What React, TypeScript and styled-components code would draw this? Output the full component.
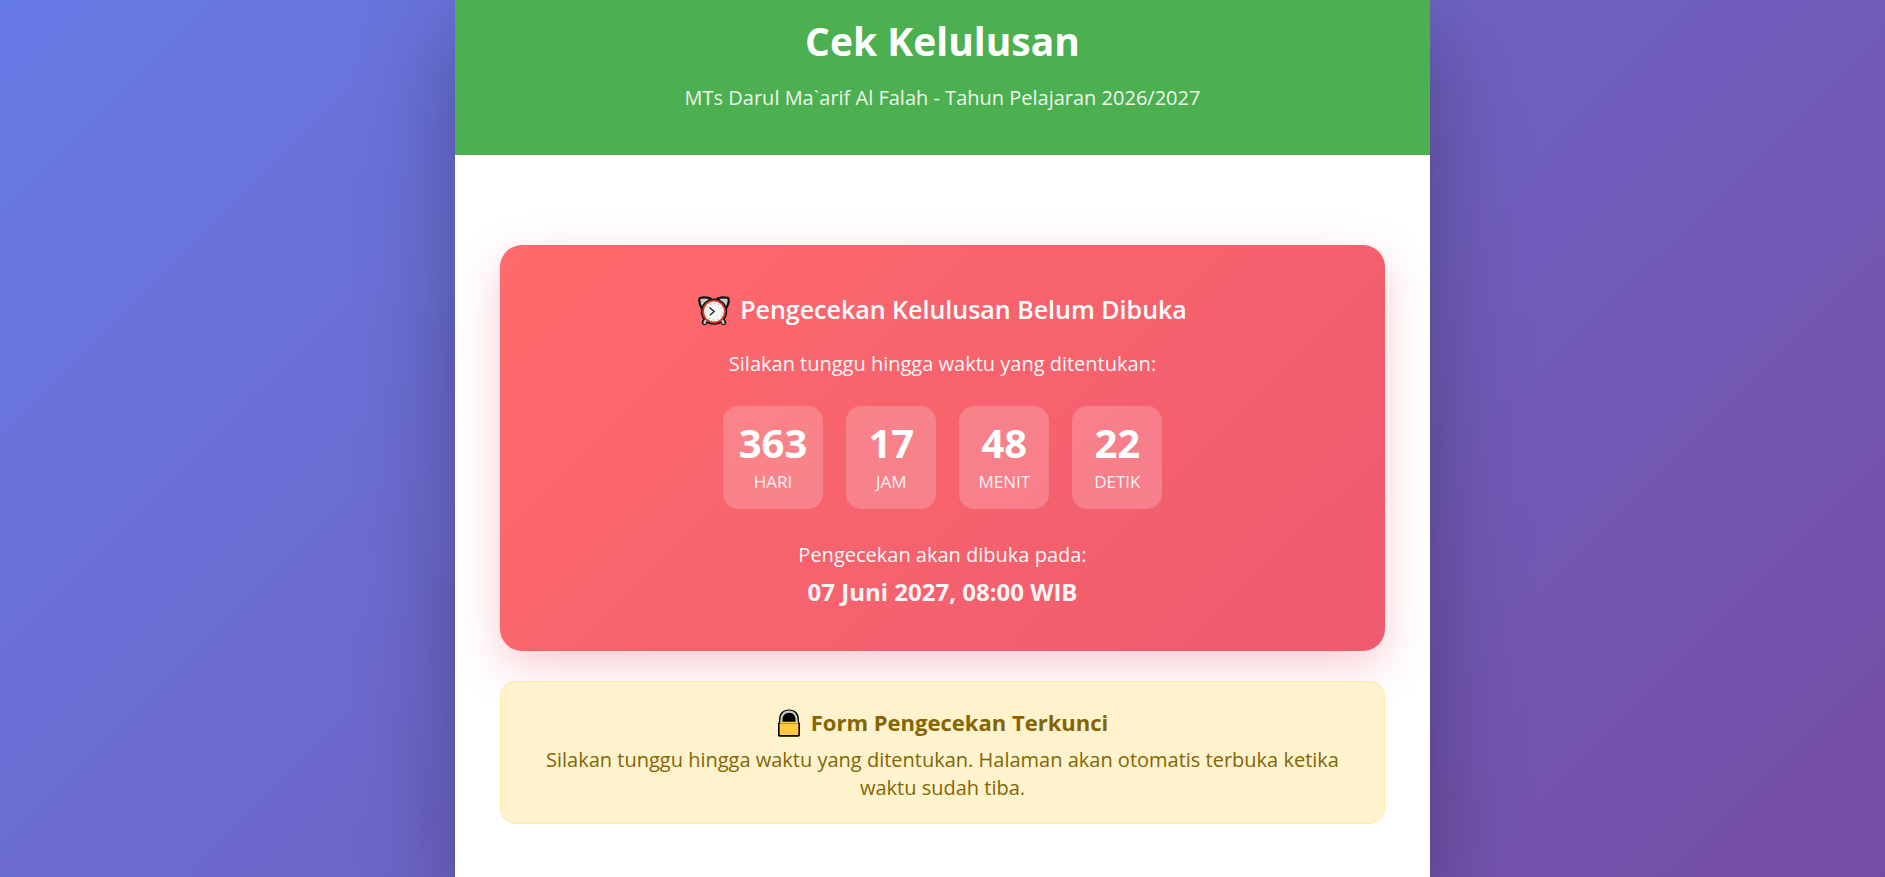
import React, { useEffect, useState } from "react";
import styled, { createGlobalStyle } from "styled-components";

const GlobalStyle = createGlobalStyle`
  * { box-sizing: border-box; margin: 0; padding: 0; }
  body {
    font-family: "Segoe UI", "Open Sans", "Noto Sans", sans-serif;
    background: #6e66c6;
  }
`;

const Page = styled.div`
  min-height: 100vh;
  display: flex;
  justify-content: center;
  overflow: hidden;
  background: linear-gradient(135deg, #667eea -6%, #764ba2 102%);
`;

const Container = styled.main`
  width: 100%;
  max-width: 975px;
  background: #fff;
  box-shadow: 0 30px 90px rgba(0, 0, 0, 0.3);
`;

const Header = styled.header`
  padding: 13px 45px 42px;
  background: #4caf50;
  color: #fff;
  text-align: center;
`;

const Title = styled.h1`
  margin-bottom: 14px;
  font-size: 39px;
  line-height: 56px;
  font-weight: 700;
`;

const Subtitle = styled.p`
  font-size: 20px;
  line-height: 30px;
  opacity: 0.9;
`;

const Content = styled.div`
  display: flex;
  flex-direction: column;
  gap: 30px;
  padding: 90px 45px 53px;
`;

const CountdownCard = styled.section`
  padding: 46px 45px 43px;
  border-radius: 22px;
  background: linear-gradient(135deg, #ff6b6b 0%, #ee5a6f 100%);
  box-shadow: 0 15px 45px rgba(238, 90, 111, 0.3);
  color: #fff;
  text-align: center;
`;

const CardTitle = styled.h2`
  display: flex;
  justify-content: center;
  align-items: center;
  gap: 10px;
  margin-bottom: 22px;
  font-size: 25px;
  line-height: 36px;
  font-weight: 600;
`;

const Lead = styled.p`
  font-size: 20px;
  line-height: 30px;
  opacity: 0.95;
`;

const Timer = styled.div`
  display: flex;
  justify-content: center;
  flex-wrap: wrap;
  gap: 23px;
  margin: 27px 0 31px;
`;

const TimeBox = styled.div`
  min-width: 90px;
  padding: 13px 16px 15px;
  border-radius: 15px;
  background: rgba(255, 255, 255, 0.2);
`;

const TimeValue = styled.span`
  display: block;
  margin-bottom: 3px;
  font-size: 40px;
  line-height: 48px;
  font-weight: 700;
`;

const TimeLabel = styled.span`
  display: block;
  font-size: 17px;
  line-height: 24px;
  text-transform: uppercase;
  opacity: 0.9;
`;

const OpeningDate = styled.strong`
  display: block;
  margin-top: 6px;
  font-size: 24px;
  line-height: 32px;
  font-weight: 700;
  opacity: 0.95;
`;

const LockedNotice = styled.section`
  padding: 24px 40px 21px;
  border: 1px solid #ffeaa7;
  border-radius: 15px;
  background: #fff3cd;
  color: #856404;
  text-align: center;
`;

const NoticeTitle = styled.h3`
  display: flex;
  justify-content: center;
  align-items: center;
  gap: 10px;
  margin-bottom: 8px;
  font-size: 22px;
  line-height: 32px;
  font-weight: 700;
`;

const NoticeText = styled.p`
  font-size: 20px;
  line-height: 28px;
`;

const AlarmIcon = () => (
  <svg width="32" height="34" viewBox="0 -4 32 34" aria-hidden="true">
    <path d="M8.5 22 L6.5 26.5 M23.5 22 L25.5 26.5" stroke="#111" strokeWidth="5.5" strokeLinecap="round" />
    <path d="M3.2 11.5 Q.2 4.5 1.8 2 Q7 .3 12.5 2.6 L5.5 11.5Z M28.8 11.5 Q31.8 4.5 30.2 2 Q25 .3 19.5 2.6 L26.5 11.5Z" fill="#c9c9c9" stroke="#111" strokeWidth="2.2" strokeLinejoin="round" />
    <circle cx="16" cy="15.6" r="13.2" fill="#111" />
    <path d="M7.6 24.5 L6.5 27 M24.4 24.5 L25.5 27" stroke="#ccc" strokeWidth="2.4" strokeLinecap="round" />
    <circle cx="16" cy="15.6" r="11.8" fill="#d83b1e" />
    <circle cx="16" cy="15.6" r="10" fill="#f7f7f7" />
    <circle cx="16" cy="15.6" r="8.2" fill="none" stroke="#aaa" strokeWidth="1.1" strokeDasharray="1.1 3.19" />
    <path d="M11.5 11.5 L16.2 15.6 L11.8 19.2" fill="none" stroke="#222" strokeWidth="1.3" />
  </svg>
);

const LockIcon = () => (
  <svg width="24" height="30" viewBox="0 -2 24 30" aria-hidden="true">
    <path d="M2 14 V11 C2 4 6 .6 12 .6 S22 4 22 11 V14Z" fill="#000" />
    <path d="M4.4 14 V11 C4.4 5.5 7.5 2.6 12 2.6 S19.6 5.5 19.6 11 V14" fill="none" stroke="#c8c8c8" strokeWidth="2.2" />
    <rect x="1.8" y="13.7" width="20.4" height="13.2" rx="1" fill="#ffc83d" stroke="#000" strokeWidth="1.6" />
    <path d="M3 13.6 H21" stroke="#ffc83d" strokeWidth="1.8" />
  </svg>
);

const START_SECONDS = ((363 * 24 + 17) * 60 + 48) * 60 + 22;

const pad = (n: number) => String(n).padStart(2, "0");

export default function App() {
  const [remaining, setRemaining] = useState(START_SECONDS);

  useEffect(() => {
    const id = window.setInterval(() => setRemaining((s) => Math.max(0, s - 60)), 60000);
    return () => window.clearInterval(id);
  }, []);

  const units = [
    { label: "Hari", value: String(Math.floor(remaining / 86400)) },
    { label: "Jam", value: pad(Math.floor(remaining / 3600) % 24) },
    { label: "Menit", value: pad(Math.floor(remaining / 60) % 60) },
    { label: "Detik", value: pad(remaining % 60) },
  ];

  return (
    <>
      <GlobalStyle />
      <Page>
        <Container>
          <Header>
            <Title>Cek Kelulusan</Title>
            <Subtitle>MTs Darul Ma`arif Al Falah - Tahun Pelajaran 2026/2027</Subtitle>
          </Header>
          <Content>
            <CountdownCard>
              <CardTitle>
                <AlarmIcon />
                Pengecekan Kelulusan Belum Dibuka
              </CardTitle>
              <Lead>Silakan tunggu hingga waktu yang ditentukan:</Lead>
              <Timer role="timer">
                {units.map((u) => (
                  <TimeBox key={u.label}>
                    <TimeValue>{u.value}</TimeValue>
                    <TimeLabel>{u.label}</TimeLabel>
                  </TimeBox>
                ))}
              </Timer>
              <Lead>Pengecekan akan dibuka pada:</Lead>
              <OpeningDate>07 Juni 2027, 08:00 WIB</OpeningDate>
            </CountdownCard>
            <LockedNotice>
              <NoticeTitle>
                <LockIcon />
                Form Pengecekan Terkunci
              </NoticeTitle>
              <NoticeText>
                Silakan tunggu hingga waktu yang ditentukan. Halaman akan otomatis terbuka ketika
                waktu sudah tiba.
              </NoticeText>
            </LockedNotice>
          </Content>
        </Container>
      </Page>
    </>
  );
}
